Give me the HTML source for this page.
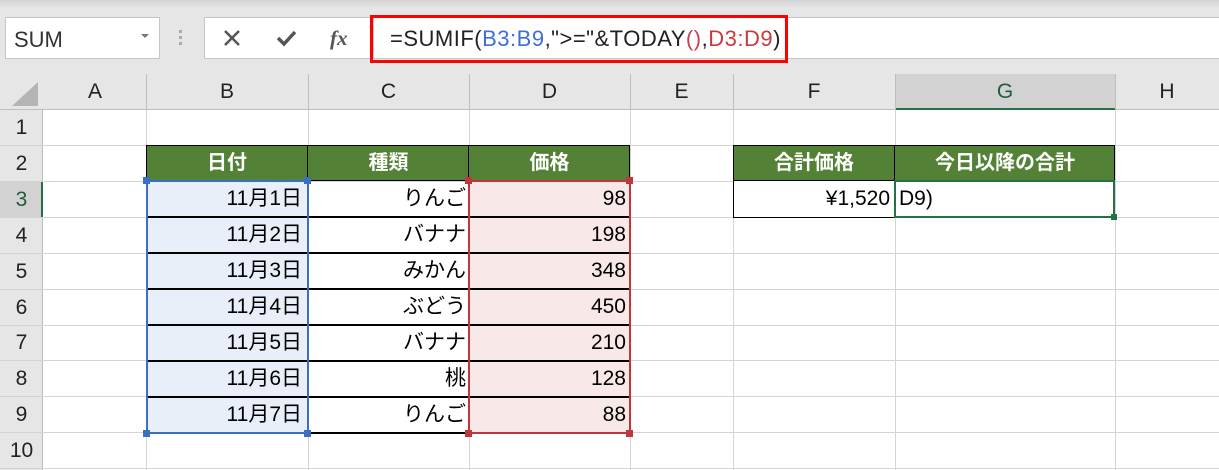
<!DOCTYPE html>
<html><head><meta charset="utf-8"><style>
*{margin:0;padding:0;box-sizing:border-box}
body{width:1219px;height:470px;overflow:hidden;background:#fff;position:relative;font-family:"Liberation Sans","Noto Sans CJK JP",sans-serif;color:#000}
.a{position:absolute}
.t{position:absolute;font-size:20px;line-height:36px;white-space:nowrap}
</style></head><body>
<div class="a" style="left:0;top:0;width:1219px;height:74px;background:#e6e6e6"></div>
<div class="a" style="left:0;top:0;width:1219px;height:8px;background:linear-gradient(#d4d4d4,#e6e6e6)"></div>
<div class="a" style="left:5px;top:17px;width:155px;height:42px;background:#fff;border:1px solid #c6c6c6"></div>
<div class="t" style="left:14px;top:22px;font-size:22px;color:#333">SUM</div>
<div class="a" style="left:141px;top:34px;border-left:4px solid transparent;border-right:4px solid transparent;border-top:4px solid #777"></div>
<div class="a" style="left:179px;top:30px;width:3px;height:3px;background:#aaa;box-shadow:0 6px #aaa,0 12px #aaa"></div>
<div class="a" style="left:204px;top:17px;width:170px;height:42px;background:#fff;border:1px solid #c6c6c6"></div>
<svg class="a" style="left:222px;top:28px" width="20" height="20"><path d="M3 3L17 17M17 3L3 17" stroke="#555" stroke-width="2.5"/></svg>
<svg class="a" style="left:275px;top:28px" width="24" height="20"><path d="M3 10L9 16L20 4" stroke="#555" stroke-width="3.5" fill="none"/></svg>
<div class="t" style="left:330px;top:20px;font-family:'Liberation Serif',serif;font-style:italic;font-weight:bold;font-size:21px;color:#555">fx</div>
<div class="a" style="left:374px;top:17px;width:845px;height:42px;background:#fff;border-top:1px solid #c6c6c6;border-bottom:1px solid #c6c6c6"></div>
<div class="a" style="left:370px;top:15px;width:418px;height:48px;border:3px solid #f00"></div>
<div class="t" style="left:390px;top:21px;font-size:22px;color:#222;letter-spacing:0.5px">=SUMIF(<span style="color:#3f6fd1">B3:B9</span>,"&gt;="&amp;TODAY<span style="color:#c9405a">()</span>,<span style="color:#c93a3a">D3:D9</span>)</div>
<div class="a" style="left:0;top:74px;width:1219px;height:36px;background:#e6e6e6;border-bottom:1px solid #bdbdbd"></div>
<div class="a" style="left:895px;top:74px;width:220px;height:36px;background:#d2d2d2;border-bottom:2px solid #217346"></div>
<svg class="a" style="left:10px;top:82px" width="30" height="26"><path d="M28 0L28 24L2 24Z" fill="#b4b4b4"/></svg>
<div class="a" style="left:0;top:110px;width:43px;height:360px;background:#e6e6e6;border-right:1px solid #bdbdbd"></div>
<div class="a" style="left:0;top:181px;width:43px;height:36px;background:#d2d2d2;border-right:2px solid #217346"></div>
<div id="g"></div>
<script>
var cols=[[44,146,'A'],[146,308,'B'],[308,469,'C'],[469,630,'D'],[630,733,'E'],[733,895,'F'],[895,1115,'G'],[1115,1219,'H']];
var h='';
cols.forEach(function(c){
 h+='<div class="a" style="left:'+c[1]+'px;top:74px;width:1px;height:36px;background:#bdbdbd"></div>';
 h+='<div class="a" style="left:'+c[1]+'px;top:110px;width:1px;height:360px;background:#d4d4d4"></div>';
 h+='<div class="t" style="left:'+c[0]+'px;width:'+(c[1]-c[0])+'px;text-align:center;top:74px;font-size:21px;color:'+(c[2]=='G'?'#1e5e3a':'#222')+'">'+c[2]+'</div>';
});
for(var r=1;r<=10;r++){
 var y=110+(r-1)*35.9;
 h+='<div class="a" style="left:0;top:'+(y+35)+'px;width:1219px;height:1px;background:#d4d4d4"></div>';
 h+='<div class="t" style="left:0;width:43px;text-align:center;top:'+y+'px;font-size:21px;color:'+(r==3?'#1e5e3a':'#222')+'">'+r+'</div>';
}
document.getElementById('g').outerHTML=h;
</script>
<div class="a" style="left:146px;top:145px;width:484px;height:36px;background:#538135;border:1px solid #000"></div>
<div class="a" style="left:307px;top:145px;width:1px;height:36px;background:#000"></div>
<div class="a" style="left:468px;top:145px;width:1px;height:36px;background:#000"></div>
<div class="t" style="left:146px;width:162px;text-align:center;top:145px;color:#fff;font-weight:bold">日付</div>
<div class="t" style="left:308px;width:161px;text-align:center;top:145px;color:#fff;font-weight:bold">種類</div>
<div class="t" style="left:469px;width:161px;text-align:center;top:145px;color:#fff;font-weight:bold">価格</div>
<div class="a" style="left:147px;top:181px;width:161px;height:252px;background:#e8eff8"></div>
<div class="a" style="left:469px;top:181px;width:161px;height:252px;background:#f9e8e8"></div>
<div id="rows"></div>
<script>
var d=[['11月1日','りんご','98'],['11月2日','バナナ','198'],['11月3日','みかん','348'],['11月4日','ぶどう','450'],['11月5日','バナナ','210'],['11月6日','桃','128'],['11月7日','りんご','88']];
var s='';
d.forEach(function(v,i){var y=181+i*36;
 s+='<div class="a" style="left:146px;top:'+(y+35)+'px;width:484px;height:2px;background:#000"></div>';
 s+='<div class="t" style="left:146px;width:156px;text-align:right;top:'+y+'px;font-size:21px">'+v[0]+'</div>';
 s+='<div class="t" style="left:308px;width:158px;text-align:right;top:'+y+'px;font-size:21px">'+v[1]+'</div>';
 s+='<div class="t" style="left:469px;width:157px;text-align:right;top:'+y+'px;font-size:21px">'+v[2]+'</div>';
});
document.getElementById('rows').outerHTML=s;
</script>
<div class="a" style="left:307px;top:181px;width:1px;height:252px;background:#000"></div>
<div class="a" style="left:146px;top:180px;width:163px;height:254px;border:2px solid #3a6fc4"></div>
<div class="a" style="left:468px;top:180px;width:163px;height:254px;border:2px solid #c0363c"></div>
<div class="a" style="left:143px;top:177px;width:7px;height:7px;background:#3a6fc4"></div>
<div class="a" style="left:304px;top:177px;width:7px;height:7px;background:#3a6fc4"></div>
<div class="a" style="left:143px;top:430px;width:7px;height:7px;background:#3a6fc4"></div>
<div class="a" style="left:304px;top:430px;width:7px;height:7px;background:#3a6fc4"></div>
<div class="a" style="left:465px;top:177px;width:7px;height:7px;background:#c0363c"></div>
<div class="a" style="left:626px;top:177px;width:7px;height:7px;background:#c0363c"></div>
<div class="a" style="left:465px;top:430px;width:7px;height:7px;background:#c0363c"></div>
<div class="a" style="left:626px;top:430px;width:7px;height:7px;background:#c0363c"></div>
<div class="a" style="left:733px;top:145px;width:382px;height:36px;background:#538135;border:1px solid #000"></div>
<div class="a" style="left:894px;top:145px;width:1px;height:36px;background:#000"></div>
<div class="t" style="left:733px;width:162px;text-align:center;top:145px;color:#fff;font-weight:bold">合計価格</div>
<div class="t" style="left:895px;width:220px;text-align:center;top:145px;color:#fff;font-weight:bold">今日以降の合計</div>
<div class="a" style="left:733px;top:180px;width:163px;height:38px;border:1px solid #000;background:#fff"></div>
<div class="t" style="left:733px;width:157px;text-align:right;top:181px;font-size:21px">¥1,520</div>
<div class="a" style="left:894px;top:180px;width:221px;height:38px;border:2px solid #217346;background:#fff"></div>
<div class="a" style="left:1111px;top:214px;width:6px;height:6px;background:#217346"></div>
<div class="t" style="left:899px;top:181px;font-size:21px">D9)</div>
</body></html>
